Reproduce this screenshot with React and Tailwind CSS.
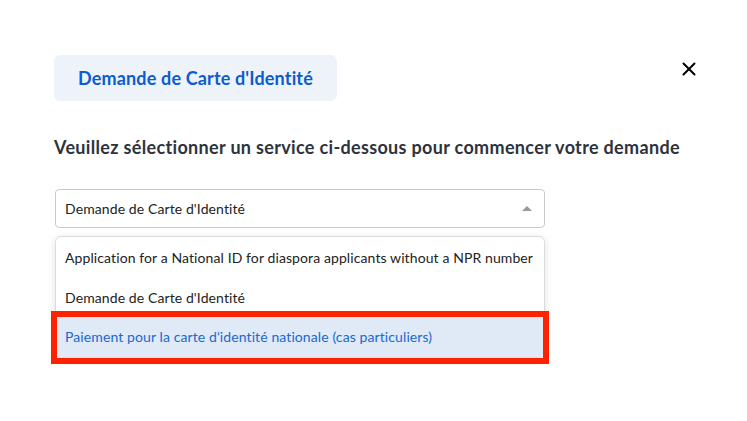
import { X } from 'lucide-react';

export default function App() {
    const options = [
        'Application for a National ID for diaspora applicants without a NPR number',
        "Demande de Carte d'Identité",
        "Paiement pour la carte d'identité nationale (cas particuliers)",
    ];

    return (
        <div
            className="w-[747px] h-[421px] bg-white relative"
            style={{ fontFamily: 'Lato, "Noto Sans", sans-serif' }}
        >
            {/* Header */}
            <div className="flex items-start justify-between pl-[54px] pr-[47px] pt-[55px]">
                <div className="h-[46px] w-[283px] flex items-center justify-center bg-[#eef3fa] rounded-md text-[#0b5ccf] text-[18px] tracking-[0.15px] font-bold">
                    Demande de Carte d'Identité
                </div>
                <button className="mt-[3px] text-black">
                    <X size={22} strokeWidth={2.2} />
                </button>
            </div>

            <h2 className="pl-[54px] mt-[34px] text-[18px] tracking-[0.33px] font-bold text-[#2d333d] leading-[24px]">
                Veuillez sélectionner un service ci-dessous pour commencer votre demande
            </h2>

            {/* Select */}
            <div className="ml-[55px] mt-[30px] w-[490px]">
                <div className="h-[39px] border border-[#c9c9c9] rounded-[4px] flex items-center justify-between pl-[9px] pr-[12px] text-[14px] tracking-[0.1px] text-[#222]">
                    <span>Demande de Carte d'Identité</span>
                    <span className="w-0 h-0 border-l-[5px] border-r-[5px] border-b-[5px] border-l-transparent border-r-transparent border-b-[#999]" />
                </div>

                {/* Dropdown */}
                <div className="mt-[8px] border border-[#dcdcdc] rounded-[6px] shadow-[0_2px_8px_rgba(0,0,0,0.12)] bg-white">
                    {options.map((opt, i) => (
                        <div
                            key={i}
                            className={`h-[40px] flex items-center px-[9px] text-[14px] tracking-[0.1px] relative ${
                                i === 2 ? 'bg-[#dfeaf6] text-[#1a68d1]' : 'text-[#222]'
                            }`}
                        >
                            {i === 2 ? <span className="-mt-[2px]">{opt}</span> : opt}
                            {i === 2 && (
                                <span className="absolute -top-[6px] -bottom-[7px] -left-[5px] -right-[5px] border-[6px] border-[#ff2200]" />
                            )}
                        </div>
                    ))}
                </div>
            </div>
        </div>
    );
}
